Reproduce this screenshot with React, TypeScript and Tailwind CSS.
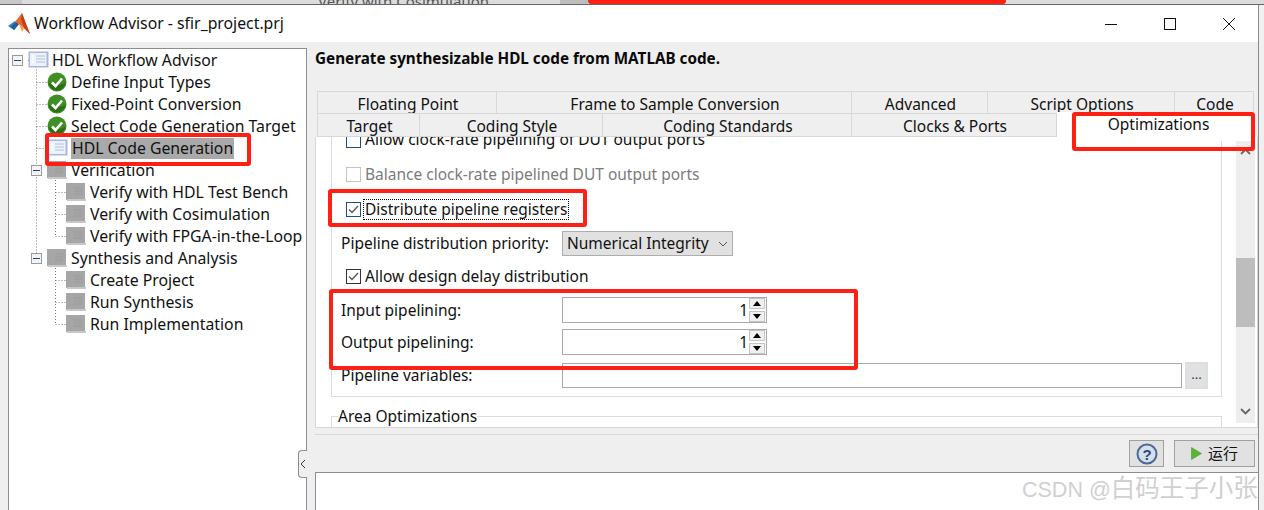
import type { ReactNode } from "react";

const uiFont = "font-['Noto_Sans','Noto_Sans_CJK_SC',sans-serif]";

type TreeRow = { label: string; depth: 0 | 1 | 2; icon: "doc" | "check" | "gray"; box?: boolean; selected?: boolean };

const treeRows: TreeRow[] = [
  { label: "HDL Workflow Advisor", depth: 0, icon: "doc", box: true },
  { label: "Define Input Types", depth: 1, icon: "check" },
  { label: "Fixed-Point Conversion", depth: 1, icon: "check" },
  { label: "Select Code Generation Target", depth: 1, icon: "check" },
  { label: "HDL Code Generation", depth: 1, icon: "doc", selected: true },
  { label: "Verification", depth: 1, icon: "gray", box: true },
  { label: "Verify with HDL Test Bench", depth: 2, icon: "gray" },
  { label: "Verify with Cosimulation", depth: 2, icon: "gray" },
  { label: "Verify with FPGA-in-the-Loop", depth: 2, icon: "gray" },
  { label: "Synthesis and Analysis", depth: 1, icon: "gray", box: true },
  { label: "Create Project", depth: 2, icon: "gray" },
  { label: "Run Synthesis", depth: 2, icon: "gray" },
  { label: "Run Implementation", depth: 2, icon: "gray" },
];

const tabsTop = [
  { label: "Floating Point", width: "w-[180px]" },
  { label: "Frame to Sample Conversion", width: "w-[355px]" },
  { label: "Advanced", width: "w-[136px]" },
  { label: "Script Options", width: "w-[187px]" },
  { label: "Code", width: "w-[79px]" },
];

const tabsBottom = [
  { label: "Target", width: "w-[103px]" },
  { label: "Coding Style", width: "w-[183px]" },
  { label: "Coding Standards", width: "w-[249px]" },
  { label: "Clocks & Ports", width: "w-[205px]" },
];

function MatlabLogo() {
  return (
    <svg width="22" height="22" viewBox="0 0 22 22" className="shrink-0">
      <path d="M0 13 L7 8 L11 11 L6 17 Z" fill="#2f7fc1" />
      <path d="M6 17 L11 11 L8 9 L3 14 Z" fill="#1f5f9e" />
      <path d="M7 9 L14 0 L22 21 L16 15 L11 11 Z" fill="#e8692a" />
      <path d="M14 0 L18 11 L22 21 L16 15 L13 6 Z" fill="#c63f17" />
      <path d="M11 11 L16 15 L14 19 Z" fill="#f2a03d" />
    </svg>
  );
}

function DocIcon({ className }: { className: string }) {
  return (
    <svg width="21" height="18" viewBox="0 0 21 18" className={className}>
      <rect x="0.5" y="0.5" width="20" height="16" fill="#a9b7dd" />
      <rect x="2" y="2" width="16.5" height="13" fill="#eef2fb" />
      <path d="M4 5h2M4 8h2M4 11h2" stroke="#ffffff" strokeWidth="1.5" />
      <path d="M8 5h9M8 8h9M8 11h9" stroke="#c8d0e6" strokeWidth="1.5" />
    </svg>
  );
}

function GrayIcon({ className }: { className: string }) {
  return (
    <svg width="20" height="18" viewBox="0 0 20 18" className={className}>
      <rect x="0" y="0" width="19" height="17" fill="#a6a6a6" />
      <rect x="1" y="16" width="19" height="2" fill="#c8c8c8" />
      <path d="M8 5h8M8 8h8M8 11h8" stroke="#9a9a9a" strokeWidth="1.2" />
    </svg>
  );
}

function CheckIcon({ className }: { className: string }) {
  return (
    <svg width="20" height="20" viewBox="0 0 20 20" className={className}>
      <circle cx="10" cy="10" r="9.5" fill="#3f8f25" />
      <path d="M1.5 10a8.5 8.5 0 0 0 17 0c-2 4-15 4-17 0z" fill="#2c6f17" />
      <path d="M5 10.5l3.5 3.5L15 6.5" fill="none" stroke="#ffffff" strokeWidth="2.6" />
    </svg>
  );
}

function TreeGuides() {
  const v = "#777777";
  const dash = "1 2";
  return (
    <svg width="90" height="300" viewBox="0 0 90 300" className="absolute left-0 top-0">
      <path
        d="M27.5 11.500v198M46.5 131v56M46.5 219v56M19 11.500h4M27.5 33.500h12M27.5 55.500h12M27.5 77.500h12M27.5 99.500h12M27.5 121.500h2M27.5 209.500h2M46.5 143.500h12M46.5 165.500h12M46.5 187.500h12M46.5 231.500h12M46.5 253.500h12M46.5 275.500h12"
        stroke={v}
        strokeDasharray={dash}
        fill="none"
      />
    </svg>
  );
}

function Tree() {
  return (
    <div className="relative h-full border border-b-0 border-[#8b8e96] bg-white text-[15.8px] text-[#111111]">
      <TreeGuides />
      {treeRows.map((row) => {
        const iconLeft = row.depth === 0 ? "ml-[19px]" : row.depth === 1 ? "ml-[38px]" : "ml-[57px]";
        const textLeft = row.depth === 0 ? "ml-[2px]" : "ml-[3px]";
        return (
          <div key={row.label} className="relative flex h-[22px] items-center whitespace-nowrap">
            {row.box && (
              <span
                className={`absolute top-[6px] flex h-[11px] w-[11px] items-center justify-center border border-[#9a9a9a] bg-[#f4f4f4] ${
                  row.depth === 0 ? "left-[3px]" : "left-[22px]"
                }`}
              >
                <span className="h-px w-[7px] bg-[#28408c]" />
              </span>
            )}
            {row.icon === "check" && <CheckIcon className={`${iconLeft} shrink-0`} />}
            {row.icon === "gray" && <GrayIcon className={`${iconLeft} shrink-0`} />}
            {row.icon === "doc" && <DocIcon className={`${iconLeft} shrink-0`} />}
            <span className={`${textLeft} px-px leading-[21px] ${row.selected ? "bg-[#a9a9a9]" : ""}`}>{row.label}</span>
          </div>
        );
      })}
    </div>
  );
}

function Checkbox({ checked, tone = "normal" }: { checked?: boolean; tone?: "normal" | "focus" | "disabled" | "blue" }) {
  const border =
    tone === "disabled" ? "border-[#c4c4c4]" : tone === "normal" ? "border-[#333333]" : "border-[#1c4f7c]";
  return (
    <span className={`flex h-[15px] w-[15px] shrink-0 items-center justify-center border bg-white ${border}`}>
      {checked && (
        <svg width="11" height="9" viewBox="0 0 11 9">
          <path d="M1 4.5l3 3L10 1" fill="none" stroke="#555555" strokeWidth="1.3" />
        </svg>
      )}
    </span>
  );
}

function CheckRow({ height, children, box }: { height: string; children: ReactNode; box: ReactNode }) {
  return (
    <div className={`flex ${height} items-center gap-[4px] pl-[14px]`}>
      {box}
      {children}
    </div>
  );
}

function Spinner() {
  return (
    <span className="flex h-[26px] w-[205px] items-center justify-end border border-[#a9a9a9] bg-white pr-px">
      <span className="pt-px text-[15.5px]">1</span>
      <span className="ml-[1px] flex w-[16px] flex-col gap-[2px]">
        <span className="flex h-[11px] items-center justify-center border border-[#c4c4c4] bg-[#f0f0f0]">
          <span className="h-0 w-0 border-x-[4px] border-b-[5px] border-x-transparent border-b-black" />
        </span>
        <span className="flex h-[11px] items-center justify-center border border-[#c4c4c4] bg-[#f0f0f0]">
          <span className="h-0 w-0 border-x-[4px] border-t-[5px] border-x-transparent border-t-black" />
        </span>
      </span>
    </span>
  );
}

function FieldRow({ height, label, children }: { height: string; label: string; children: ReactNode }) {
  return (
    <div className={`flex ${height} items-center pl-[9px]`}>
      <span className="w-[221px] shrink-0 whitespace-nowrap pt-px">{label}</span>
      {children}
    </div>
  );
}

function OptionsPanel() {
  return (
    <div className="flex h-[291px] border-x border-b border-[#d8d8d8] bg-white">
      <div className="h-full w-[920px] overflow-hidden text-[15.5px] text-[#111111]">
        <div className="-mt-[14px] ml-[15px] w-[891px]">
          <div className="border-x border-b border-[#dcdcdc] pb-[4px]">
            <CheckRow height="h-[34px]" box={<Checkbox tone="blue" />}>
              <span>Allow clock-rate pipelining of DUT output ports</span>
            </CheckRow>
            <CheckRow height="h-[34px]" box={<Checkbox tone="disabled" />}>
              <span className="pt-px text-[#7b7b7b]">Balance clock-rate pipelined DUT output ports</span>
            </CheckRow>
            <CheckRow height="h-[36px]" box={<Checkbox checked tone="focus" />}>
              <span className="-ml-[2px] border border-dotted border-black px-px leading-[19px]">Distribute pipeline registers</span>
            </CheckRow>
            <FieldRow height="h-[32px]" label="Pipeline distribution priority:">
              <span className="flex h-[25px] w-[171px] items-center justify-between border border-[#adadad] bg-[#e1e1e1] pl-[4px] pr-[4px] pt-px">
                Numerical Integrity
                <svg width="10" height="6" viewBox="0 0 10 6">
                  <path d="M1 1l4 4 4-4" fill="none" stroke="#555555" strokeWidth="1" />
                </svg>
              </span>
            </FieldRow>
            <CheckRow height="h-[34px]" box={<Checkbox checked />}>
              <span className="pt-px">Allow design delay distribution</span>
            </CheckRow>
            <FieldRow height="h-[33px] pt-px" label="Input pipelining:">
              <Spinner />
            </FieldRow>
            <FieldRow height="h-[32px]" label="Output pipelining:">
              <Spinner />
            </FieldRow>
            <FieldRow height="h-[34px]" label="Pipeline variables:">
              <span className="h-[25px] w-[620px] shrink-0 border border-[#a9a9a9] bg-white" />
              <span className="ml-[3px] flex h-[27px] w-[23px] shrink-0 items-center justify-center border-2 border-[#dedede] bg-[#e1e1e1] text-[13px] text-[#0b3f74]">
                ...
              </span>
            </FieldRow>
          </div>
          <fieldset className="mt-[9px] h-[60px] border border-[#dcdcdc]">
            <legend className="ml-[6px] text-[15.5px] leading-[20px]">Area Optimizations</legend>
          </fieldset>
        </div>
      </div>
      <div className="ml-0 mt-[4px] flex h-[282px] w-[19px] flex-col items-center bg-[#eeeeee] pt-[7px]">
        <svg width="11" height="7" viewBox="0 0 11 7" className="shrink-0">
          <path d="M1 6l4.500-4.500L10 6" fill="none" stroke="#666666" strokeWidth="1.8" />
        </svg>
        <span className="mt-[103px] h-[69px] w-full shrink-0 bg-[#bdbdbd]" />
        <svg width="11" height="7" viewBox="0 0 11 7" className="mt-[81px] shrink-0">
          <path d="M1 1l4.500 4.500L10 1" fill="none" stroke="#666666" strokeWidth="1.8" />
        </svg>
      </div>
    </div>
  );
}

function RedBox({ className }: { className: string }) {
  return <div className={`pointer-events-none absolute rounded-[3px] border-[4px] border-[#ff2015] ${className}`} />;
}

export default function App() {
  return (
    <div className={`relative flex h-[510px] w-[1264px] flex-col overflow-hidden bg-[#f0f0f0] ${uiFont}`}>
      <div className="flex h-[5px] shrink-0 overflow-hidden border-b border-[#666666] bg-[#dcdcdc] text-[15px] leading-[5px] text-[#555555]">
        <span className="w-[22px] shrink-0 bg-[#c8c8c8]" />
        <span className="ml-[296px] -mt-px w-[228px] shrink-0 whitespace-nowrap">Verify with Cosimulation</span>
        <span className="ml-[14px] w-[28px] shrink-0 bg-[#bdbdbd]" />
      </div>
      <div className="flex min-h-0 w-[1259px] flex-1 flex-col border-r border-[#8a8a8a] bg-[#efefef]">
        <header className="flex h-[37px] shrink-0 items-center bg-white pl-[8px] text-[15.8px] text-[#111111]">
          <MatlabLogo />
          <span className="ml-[4px] whitespace-nowrap">Workflow Advisor - sfir_project.prj</span>
          <div className="ml-auto mr-[23px] flex items-center gap-[47px]">
            <svg width="12" height="12" viewBox="0 0 12 12">
              <path d="M0 6.500h12" stroke="#111111" />
            </svg>
            <svg width="12" height="12" viewBox="0 0 12 12">
              <rect x="0.500" y="0.500" width="11" height="11" fill="none" stroke="#111111" />
            </svg>
            <svg width="12" height="12" viewBox="0 0 12 12">
              <path d="M0 0l12 12M12 0L0 12" stroke="#111111" />
            </svg>
          </div>
        </header>
        <div className="flex min-h-0 flex-1">
          <div className="relative w-[307px] shrink-0 pl-[8px] pt-[6px]">
            <Tree />
            <span className="absolute right-0 top-[408px] flex h-[28px] w-[9px] items-center justify-center rounded-l-[4px] border border-r-0 border-[#8b8e96] bg-[#efefef]">
              <svg width="6" height="10" viewBox="0 0 6 10">
                <path d="M5 1L1 5l4 4" fill="none" stroke="#333333" />
              </svg>
            </span>
          </div>
          <div className="flex min-w-0 flex-1 flex-col pl-[8px]">
            <h1 className="h-[49px] shrink-0 pt-[5px] text-[15.25px] font-bold leading-[22px] text-[#0a0a0a]">
              Generate synthesizable HDL code from MATLAB code.
            </h1>
            <div className="ml-[2px] w-[937px] shrink-0 text-[15.5px] text-[#111111]">
              <div className="flex h-[22px] overflow-hidden">
                {tabsTop.map((tab) => (
                  <span
                    key={tab.label}
                    className={`${tab.width} border-t border-r border-[#d8d8d8] pl-[2px] pt-[1px] text-center leading-[22px] first:border-l`}
                  >
                    {tab.label}
                  </span>
                ))}
              </div>
              <div className="flex h-[24px]">
                {tabsBottom.map((tab) => (
                  <span
                    key={tab.label}
                    className={`${tab.width} h-[24px] overflow-hidden border-y border-r border-[#d8d8d8] pl-[2px] pt-px text-center leading-[22px] first:border-l`}
                  >
                    {tab.label}
                  </span>
                ))}
                <span className="relative -mt-px h-[29px] w-[197px] bg-white pl-[6px] pt-px text-center leading-[22px]">
                  Optimizations
                </span>
              </div>
            </div>
            <OptionsPanel />
            <div className="mt-[6px] shrink-0 border-t border-[#d8d8d8]" />
            <div className="flex h-[37px] shrink-0 items-start justify-end gap-[10px] pr-[3px] pt-[5px]">
              <span className="flex h-[27px] w-[35px] items-center justify-center border border-[#a0a0a0] bg-[#e1e1e1]">
                <svg width="22" height="22" viewBox="0 0 22 22">
                  <circle cx="11" cy="11" r="9.500" fill="#d5deea" stroke="#4a6a94" strokeWidth="2" />
                  <text x="11" y="16.500" textAnchor="middle" fontSize="15" fontWeight="700" fill="#2c4a75" fontFamily="Liberation Sans">
                    ?
                  </text>
                </svg>
              </span>
              <span className="flex h-[27px] w-[81px] items-center justify-center gap-[6px] border border-[#a0a0a0] bg-[#e1e1e1] text-[15px] text-[#111111]">
                <svg width="11" height="13" viewBox="0 0 11 13">
                  <path d="M0.500 0.500L10.500 6.500L0.500 12.500Z" fill="#5cb531" stroke="#3f8f25" strokeWidth="0.500" />
                </svg>
                运行
              </span>
            </div>
            <div className="min-h-0 flex-1 border-l border-t border-[#8b8e96] bg-white" />
          </div>
        </div>
      </div>
      <div className="absolute left-[1022px] top-[474px] flex items-baseline whitespace-nowrap font-['Liberation_Sans','Noto_Sans_CJK_SC',sans-serif] text-[21.5px] leading-[30px] text-[#d0d0d0]">
        CSDN @<span className="text-[24.500px]">白码王子小张</span>
      </div>
      <RedBox className="left-[588px] top-[-8px] h-[12px] w-[418px]" />
      <RedBox className="left-[45px] top-[133px] h-[33px] w-[206px]" />
      <RedBox className="left-[1072px] top-[112px] h-[39px] w-[183px]" />
      <RedBox className="left-[328px] top-[189px] h-[38px] w-[259px]" />
      <RedBox className="left-[329px] top-[289px] h-[81px] w-[529px]" />
    </div>
  );
}
